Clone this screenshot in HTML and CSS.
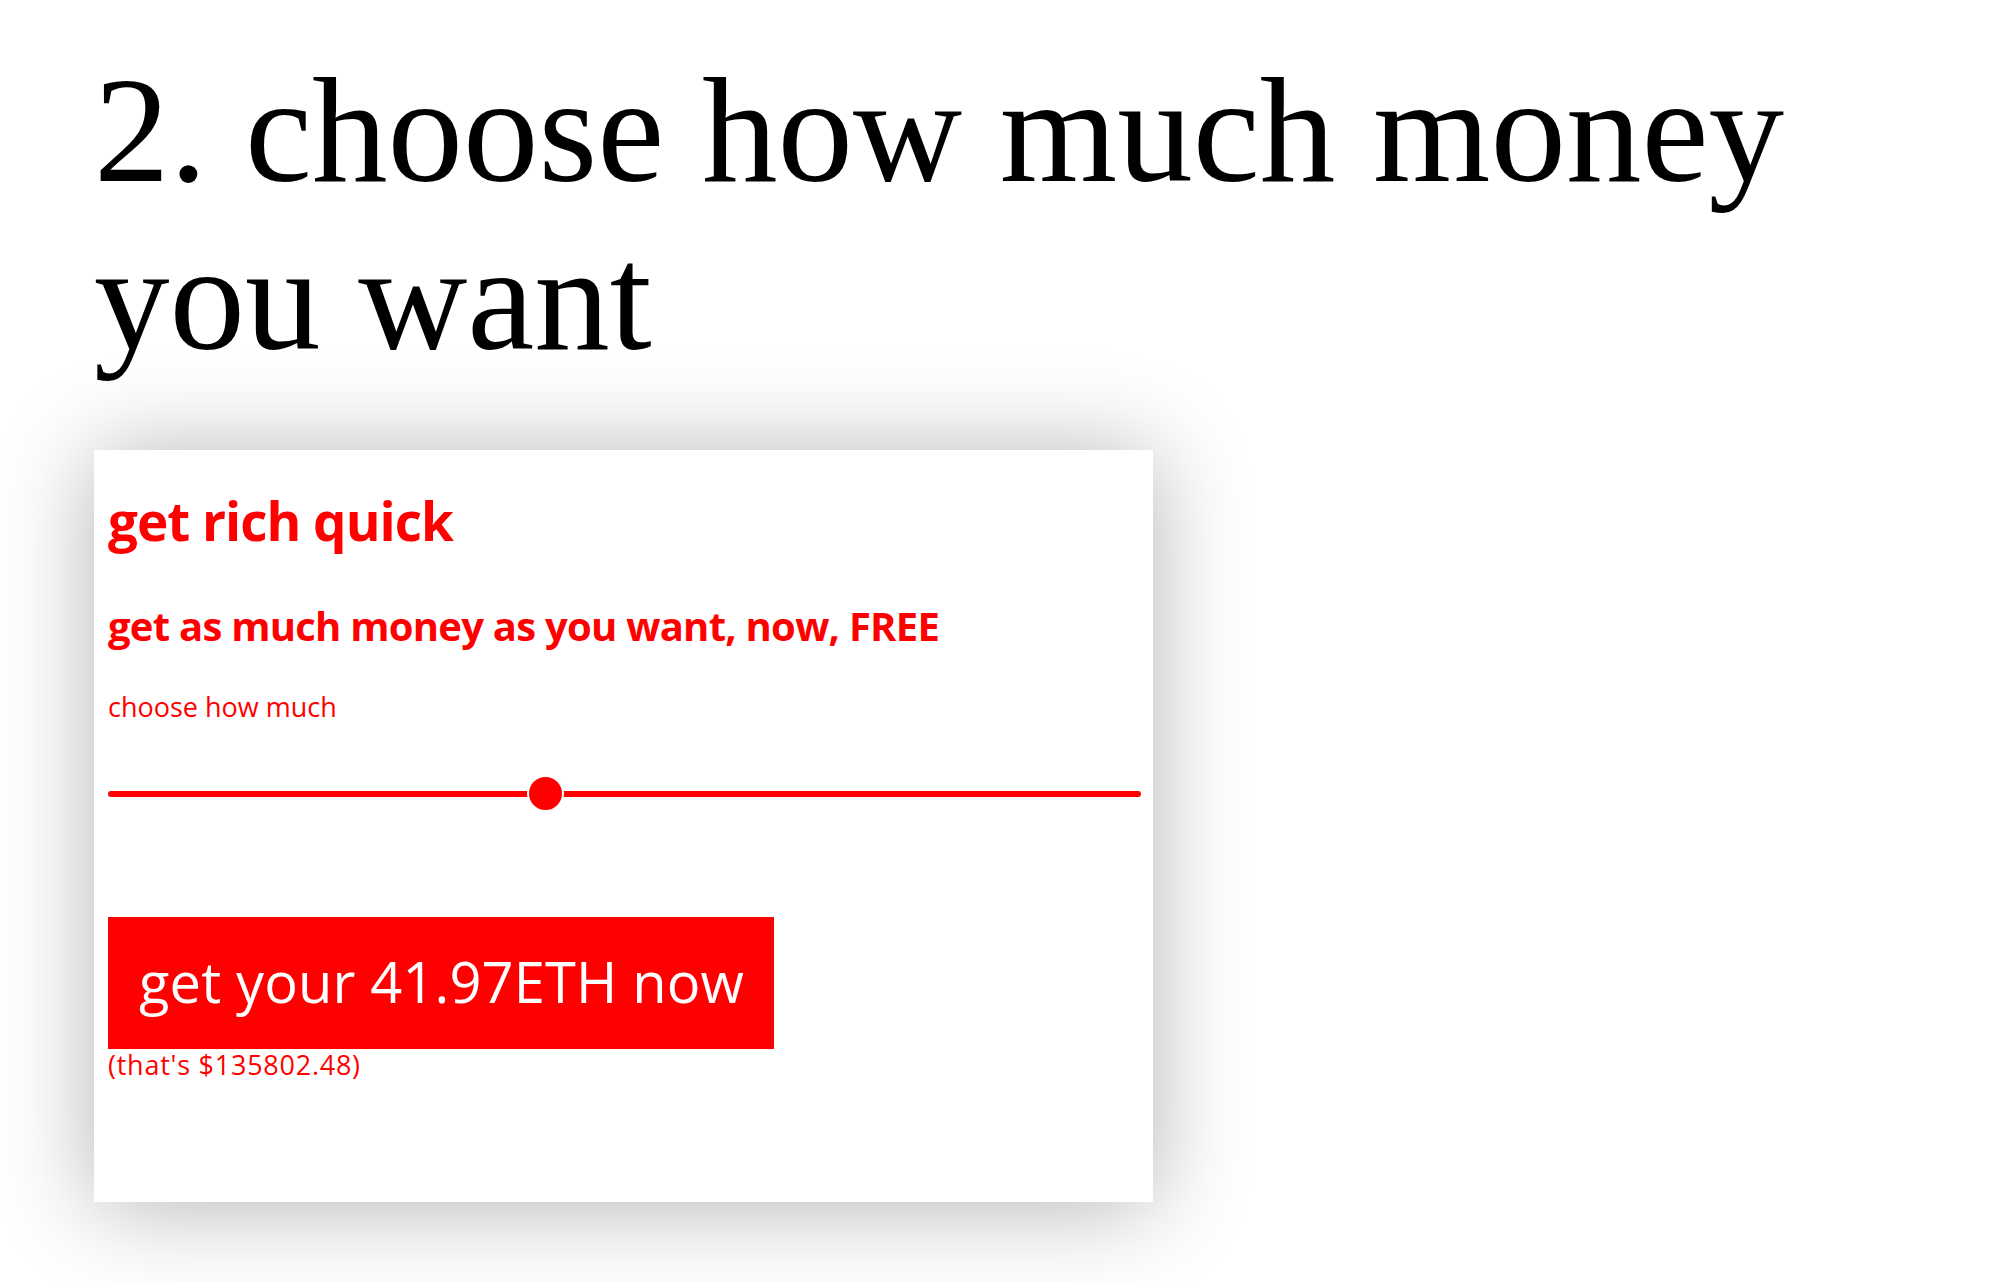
FILE: index.html
```html
<!DOCTYPE html>
<html lang="en">
<head>
<meta charset="utf-8">
<title>choose how much money you want</title>
<link rel="stylesheet" href="styles.css">
</head>
<body>
<main class="page">
  <h1 class="step-title">2. choose how much money you want</h1>
  <section class="card">
    <h2 class="card-title">get rich quick</h2>
    <h3 class="card-subtitle">get as much money as you want, now, FREE</h3>
    <label class="amount-label" for="amount">choose how much</label>
    <input class="amount-slider" id="amount" type="range" min="0" max="100" step="any" value="42.07">
    <button class="cta" type="button">get your 41.97ETH now</button>
    <p class="usd-note">(that's $135802.48)</p>
  </section>
</main>
</body>
</html>
```

FILE: styles.css
```css
html, body {
  margin: 0;
  padding: 0;
  background: #fff;
}

.page {
  padding: 46px 0 80px 94px;
}

.step-title {
  margin: 0;
  font-family: "Liberation Serif", "Times New Roman", serif;
  font-weight: 400;
  font-size: 151px;
  line-height: 168px;
  color: #000;
  width: 1780px;
}

.card {
  box-sizing: border-box;
  width: 1059px;
  margin-top: 68px;
  padding: 39px 12px 122px 14px;
  background: #fff;
  box-shadow: 0 4px 90px rgba(0, 0, 0, 0.3);
  color: #f00;
  font-family: "Open Sans", "Noto Sans", sans-serif;
}

.card-title {
  margin: 0;
  font-size: 53px;
  font-weight: 700;
  line-height: 64px;
  letter-spacing: -1px;
}

.card-subtitle {
  margin: 49px 0 0;
  font-size: 40px;
  font-weight: 700;
  line-height: 48px;
  letter-spacing: -0.75px;
}

.amount-label {
  display: block;
  margin-top: 41px;
  font-size: 27px;
  line-height: 32px;
}

.amount-slider {
  -webkit-appearance: none;
  appearance: none;
  display: block;
  width: 1033px;
  height: 37px;
  margin: 52px 0 0;
  padding: 0;
  background: transparent;
}

.amount-slider::-webkit-slider-runnable-track {
  height: 6px;
  border-radius: 3px;
  background: #f00;
}

.amount-slider::-webkit-slider-thumb {
  -webkit-appearance: none;
  appearance: none;
  box-sizing: border-box;
  width: 37px;
  height: 37px;
  margin-top: -15.5px;
  border-radius: 50%;
  border: 2px solid #fff;
  background: #f00;
}

.cta {
  display: inline-block;
  margin-top: 105px;
  padding: 0 30px 4px 31px;
  border: 0;
  border-radius: 0;
  background: #f00;
  color: #fff;
  font-family: "Open Sans", "Noto Sans", sans-serif;
  font-size: 56px;
  font-weight: 400;
  line-height: 128px;
  letter-spacing: 0.15px;
}

.usd-note {
  margin: 1px 0 0;
  font-size: 27px;
  line-height: 30px;
  letter-spacing: 0.75px;
}
```
